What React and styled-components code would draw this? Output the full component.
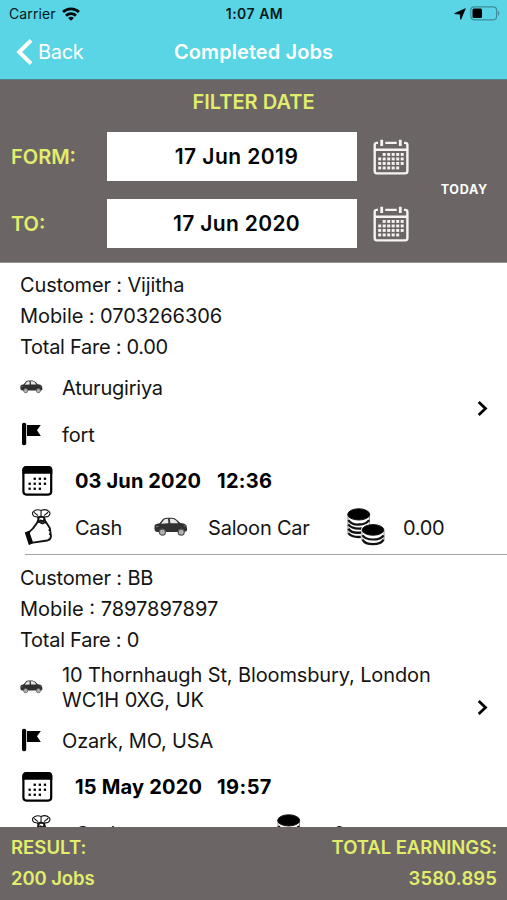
import React from "react";
import styled, { createGlobalStyle } from "styled-components";

const GlobalStyle = createGlobalStyle`
  *, *::before, *::after { box-sizing: border-box; }
  body {
    margin: 0;
    overflow: hidden;
    background: #fff;
    font-family: Inter, "Liberation Sans", sans-serif;
    color: #141414;
  }
  svg { display: block; flex: none; }
`;

const Screen = styled.div`
  display: flex;
  flex-direction: column;
  width: 507px;
  height: 900px;
  background: #fff;
  overflow: hidden;
`;

const Text = styled.span`
  font-size: ${(p) => p.$size || 20}px;
  font-weight: ${(p) => p.$weight || 400};
  letter-spacing: ${(p) => p.$track || 0}px;
  white-space: nowrap;
`;

const Header = styled.header`
  flex: none;
  height: 80px;
  background: #5ad5e6;
  border-bottom: 1px solid #55808a;
`;

const StatusBar = styled.div`
  display: grid;
  grid-template-columns: 1fr auto 1fr;
  align-items: center;
  height: 27px;
  padding: 0 7px 0 9px;
  color: #06191c;
`;

const StatusSide = styled.div`
  display: flex;
  align-items: center;
  gap: ${(p) => (p.$end ? 4 : 6)}px;
  justify-content: ${(p) => (p.$end ? "flex-end" : "flex-start")};
`;

const NavBar = styled.nav`
  display: grid;
  grid-template-columns: 1fr auto 1fr;
  align-items: center;
  height: 50px;
  padding: 0 16px;
  color: #fff;
`;

const BackButton = styled.button`
  display: flex;
  align-items: center;
  gap: 6px;
  padding: 0;
  border: 0;
  background: none;
  color: inherit;
  font: inherit;
`;

const Filter = styled.section`
  flex: none;
  height: 183px;
  padding: 8px 19px 0 11px;
  background: #6b6665;
  border-bottom: 1px solid #979392;
`;

const FilterTitle = styled.h2`
  margin: 0 0 17px;
  padding-left: 8px;
  line-height: 26px;
  text-align: center;
  color: #e2ed6b;
  font-weight: 500;
`;

const FilterBody = styled.div`
  display: flex;
  align-items: center;
  justify-content: space-between;
`;

const DateRows = styled.div`
  display: flex;
  flex-direction: column;
  gap: 18px;
`;

const DateRow = styled.label`
  display: grid;
  grid-template-columns: 96px 250px 52px;
  align-items: center;
  height: 49px;
  color: #e2ed6b;

  svg { justify-self: end; }
`;

const DateField = styled.div`
  display: flex;
  align-items: center;
  justify-content: center;
  height: 49px;
  padding-left: 9px;
  background: #fff;
  color: #050505;
`;

const Today = styled.button`
  padding: 0;
  margin-top: -4px;
  border: 0;
  background: none;
  color: #fff;
  font: inherit;
`;

const List = styled.main`
  flex: 1;
  min-height: 0;
  overflow: hidden;
`;

const Job = styled.article`
  display: grid;
  grid-template-columns: 1fr 30px;
  padding: 7px 0 0 20px;
  height: ${(p) => (p.$last ? "306px" : "291px")};
`;

const Separator = styled.hr`
  height: 1px;
  margin: 0 0 1px 25px;
  border: 0;
  background: #a4a4a4;
`;

const JobInfo = styled.div`
  display: flex;
  flex-direction: column;
`;

const Line = styled.div`
  height: 31px;
  line-height: 31px;
`;

const PlaceRow = styled.div`
  display: grid;
  grid-template-columns: 42px 1fr;
  align-items: center;
  height: ${(p) => p.$height}px;
  line-height: 24.5px;
`;

const PlaceText = styled.div`
  display: flex;
  flex-direction: column;
  padding-top: 2px;
`;

const WhenRow = styled.div`
  display: flex;
  align-items: center;
  height: 46px;
  padding: 2px 0 0 2px;
  color: #000;
`;

const DayText = styled.div`
  width: 142px;
  margin-left: 22px;
`;

const PayRow = styled.div`
  display: flex;
  align-items: center;
  height: 46px;
  padding: 1px 0 0 4px;

  ${Text} { display: block; padding-top: 2px; }
`;

const PayMethod = styled.div`
  width: 79px;
  margin-left: 22px;
`;

const Vehicle = styled.div`
  display: flex;
  align-items: center;
  gap: 20px;
  width: ${(p) => (p.$empty ? 123 : 193)}px;
`;

const Amount = styled.div`
  margin-left: 18px;
`;

const Open = styled.div`
  align-self: start;
  margin-top: ${(p) => p.$top}px;
`;

const Footer = styled.footer`
  flex: none;
  display: flex;
  justify-content: space-between;
  height: 73px;
  padding: 5px 10px 0 11px;
  background: #6b6665;
  color: #e2ed6b;
`;

const Total = styled.div`
  display: flex;
  flex-direction: column;
  line-height: 30.5px;
  text-align: ${(p) => (p.$end ? "right" : "left")};
`;

const WifiIcon = () => (
  <svg width="18" height="14" viewBox="0 0 18 14" fill="none" stroke="#020b0d" strokeWidth="2.8">
    <path d="M1 5.1C5.4.8 12.6.8 17 5.1" />
    <path d="M4 8.6C6.8 6 11.2 6 14 8.6" />
    <path d="M9 13.7 6.1 10.9C7.7 9.5 10.3 9.5 11.9 10.9Z" fill="#020b0d" stroke="none" />
  </svg>
);

const LocationIcon = () => (
  <svg width="12" height="12" viewBox="0 0 12 12">
    <path d="M.7 5.6 11.3.7 6.7 11.4 6.2 6.1Z" fill="#000" stroke="#000" strokeWidth=".8" strokeLinejoin="round" />
  </svg>
);

const BatteryIcon = () => (
  <svg width="30" height="15" viewBox="0 0 30 15">
    <rect x=".8" y=".8" width="25.8" height="13" rx="3.5" fill="none" stroke="#3c8c98" strokeWidth="1.2" />
    <rect x="2.5" y="2.6" width="9.5" height="9.4" rx="1.5" fill="#000" />
    <path d="M28 5v4.6c1.8-.7 1.8-3.9 0-4.6Z" fill="#3c8c98" />
  </svg>
);

const BackIcon = () => (
  <svg width="16" height="26" viewBox="0 0 16 26" fill="none" stroke="#fff" strokeWidth="4">
    <path d="M15 1.4 3.2 13 15 24.6" />
  </svg>
);

const FilterCalendarIcon = () => {
  const dots = [];
  for (let r = 0; r < 4; r++)
    for (let c = 0; c < 6; c++)
      if (!(r === 0 && c === 0) && !(r === 3 && c === 5))
        dots.push(<rect key={`${r}-${c}`} x={5.2 + c * 4.5} y={14 + r * 4.5} width="3" height="2.9" />);
  return (
    <svg width="36" height="36" viewBox="0 0 36 36" fill="#f5f3f3">
      <g fill="none" stroke="#f5f3f3" strokeWidth="2.4">
        <path d="M5 3.9H3.8Q1.7 3.9 1.7 6V32Q1.7 34.4 4 34.4H32Q34.4 34.4 34.4 32V6Q34.4 3.9 32.2 3.9H31M12.3 3.9H23.7M2 10.7H34" />
        <path d="M8.7.8V7M27.3.8V7" strokeWidth="2.8" />
      </g>
      {dots}
    </svg>
  );
};

const CalendarIcon = () => {
  const dots = [];
  for (let r = 0; r < 3; r++)
    for (let c = 0; c < 4; c++)
      if (!(r === 0 && c === 0) && !(r === 2 && c === 3))
        dots.push(<rect key={`${r}-${c}`} x={6.5 + c * 5.1} y={11.6 + r * 5} width="2.3" height="2.3" />);
  return (
    <svg width="31" height="30" viewBox="0 0 31 30">
      <rect x="1.4" y="1.2" width="27.8" height="27.4" rx="3" fill="#fff" stroke="#000" strokeWidth="2.2" />
      <path d="M.4 7.7V4Q.4.3 4 .3H26.6Q30.3.3 30.3 4V7.7Z" />
      {dots}
    </svg>
  );
};

const CarIcon = ({ width, height }) => (
  <svg width={width} height={height} viewBox="0 0 34 20" preserveAspectRatio="none">
    <path
      d="M.6 8.5Q.8 7 5.5 6.2L8.5 2.4Q9.5.8 13 .7H18Q20.5.7 23 3L26.3 6.1Q31 6.5 32.5 8.4L33.2 12.7Q33 14.8 30.5 15H3Q.4 14.6.5 11.8Z"
      fill="#303030"
    />
    <path d="M7 6.7 9.6 3.2Q10.4 1.8 14.1 1.8L14.4 6.3ZM15.8 1.8H18Q20 1.9 22 3.6L24.2 6.3H16.4Z" fill="#e6e6e6" />
    <path d="M2 9.5h2.5M29.8 9h1.8" stroke="#888" strokeWidth=".9" />
    <g fill="#c4c4c4" stroke="#555" strokeWidth="1.2">
      <circle cx="8.4" cy="15.2" r="3" />
      <circle cx="27.2" cy="15.2" r="3" />
    </g>
    <path d="M8.4 13v4.4M6.2 15.2h4.4M27.2 13v4.4M25 15.2h4.4" stroke="#999" strokeWidth=".7" />
  </svg>
);

const FlagIcon = () => (
  <svg width="21" height="24" viewBox="0 0 21 24">
    <rect x="2" y=".8" width="4.2" height="22.4" rx="1.8" />
    <path d="M7 2.9H20.8L17 8.3 20.8 14H7Z" />
  </svg>
);

const MoneyBagIcon = () => (
  <svg width="29" height="38" viewBox="0 0 29 38" fill="none" stroke="#111" strokeWidth="1.4" strokeLinejoin="round">
    <path d="M14.3 9.3 10 8.2Q7.3 5.7 9.3 3.7 12.5.5 17.1 2.4 21.8.3 25.2 3.6 27.2 5.8 24.2 8.4L19.8 9.3ZM17.1 2.5 17 9M10 4.4 14.1 7.6M24.2 4.3 20 7.6" strokeWidth="1.1" />
    <path d="M13.8 9.4Q16.8 7.7 20.5 9.5L19.6 13H15Z" />
    <path d="M15 9.4 13.3 14.5M20 9.5 21.7 14.4M16.1 12 19.9 14" strokeWidth="1.8" />
    <path d="M14.2 13.4 8.8 20.6Q6 22.7 5.1 24.5L4 25 7.2 34.8 23.3 32.5Q26.7 31.6 27 28.4L25.9 20.2 21.9 14 18.4 15.5 14.2 13.4" strokeWidth="1.8" />
    <path d="M.8 24.6 5 22.8 9.2 34.7 4.9 37.2Z" fill="#080808" stroke="none" />
    <path d="M25.8 20.5 25 23M26.6 24.5 25.4 27" />
  </svg>
);

const CoinsIcon = () => (
  <svg width="38" height="38" viewBox="0 0 38 38" fill="none" stroke="#111">
    <g strokeWidth="2.3">
      <path d="M1.3 12.1Q5 17.1 12 16.5 19.3 16.5 22 12" />
      <path d="M1.3 16.4Q5 21.5 15 20.5" />
      <path d="M1.3 20.7Q5 25.8 14 24.5" />
      <path d="M1.3 25.1Q5 29.7 13.8 28.9" />
    </g>
    <path d="M1 6V25.4M22.5 6V16" strokeWidth=".5" />
    <ellipse cx="11.7" cy="6.4" rx="11" ry="5.6" fill="#000" />
    <path d="M14.2 20.5Q16 15.5 26 15.3V37.5Q14.2 37.5 14.2 31Z" fill="#fff" stroke="none" />
    <g strokeWidth="2.2">
      <path d="M15.5 27.3Q18 31.5 26 31.5T36.6 27.3" />
      <path d="M15.5 31.6Q18 36.2 26 36.2T36.6 31.6" />
    </g>
    <path d="M15 22V32M37 22V32" strokeWidth=".5" />
    <ellipse cx="26" cy="21.9" rx="10.8" ry="5.3" fill="#000" />
  </svg>
);

const ChevronIcon = () => (
  <svg width="12" height="16" viewBox="0 0 12 16" fill="none" stroke="#050505" strokeWidth="2.8">
    <path d="M1.7 1 8.5 7.5 1.7 14" />
  </svg>
);

const jobs = [
  {
    lines: [["Customer : Vijitha", -0.15], ["Mobile : 0703266306", -0.06], ["Total Fare : 0.00", -0.28]],
    pickup: [["Aturugiriya", -0.22]],
    drop: ["fort", -0.15],
    day: ["03 Jun 2020", 0.13],
    time: ["12:36", 0.3],
    vehicle: "Saloon Car",
    amount: "0.00",
    openTop: 131,
  },
  {
    lines: [["Customer : BB", -0.15], ["Mobile : 7897897897", 0], ["Total Fare : 0", -0.26]],
    pickup: [["10 Thornhaugh St, Bloomsbury, London", -0.12], ["WC1H 0XG, UK", -0.05]],
    drop: ["Ozark, MO, USA", -0.15],
    day: ["15 May 2020", 0.2],
    time: ["19:57", 0.45],
    vehicle: "",
    amount: "0",
    openTop: 137,
  },
];

const filters = [
  { label: "FORM:", labelTrack: 0, value: "17 Jun 2019", track: 0.45 },
  { label: "TO:", labelTrack: 0, value: "17 Jun 2020", track: 0.35 },
];

function JobCard({ job, last }) {
  return (
    <Job $last={last}>
      <JobInfo>
        {job.lines.map(([text, track]) => (
          <Line key={text}><Text $track={track}>{text}</Text></Line>
        ))}
        <PlaceRow $height={job.pickup.length > 1 ? 61 : 48}>
          <CarIcon width={23} height={14} />
          <PlaceText>
            {job.pickup.map(([text, track]) => <Text key={text} $track={track}>{text}</Text>)}
          </PlaceText>
        </PlaceRow>
        <PlaceRow $height={46}>
          <FlagIcon />
          <PlaceText><Text $track={job.drop[1]}>{job.drop[0]}</Text></PlaceText>
        </PlaceRow>
        <WhenRow>
          <CalendarIcon />
          <DayText><Text $weight={700} $track={job.day[1]}>{job.day[0]}</Text></DayText>
          <Text $weight={700} $track={job.time[1]}>{job.time[0]}</Text>
        </WhenRow>
        <PayRow>
          <MoneyBagIcon />
          <PayMethod><Text $track={-0.3}>Cash</Text></PayMethod>
          <Vehicle $empty={!job.vehicle}>
            {job.vehicle && <CarIcon width={34} height={20} />}
            {job.vehicle && <Text $track={-0.2}>{job.vehicle}</Text>}
          </Vehicle>
          <CoinsIcon />
          <Amount><Text $track={-0.3}>{job.amount}</Text></Amount>
        </PayRow>
      </JobInfo>
      <Open $top={job.openTop}><ChevronIcon /></Open>
    </Job>
  );
}

export default function App() {
  return (
    <Screen>
      <GlobalStyle />
      <Header>
        <StatusBar>
          <StatusSide>
            <Text $size={14} $track={0.1}>Carrier</Text>
            <WifiIcon />
          </StatusSide>
          <Text $size={14} $weight={600} $track={0.5}>1:07 AM</Text>
          <StatusSide $end>
            <LocationIcon />
            <BatteryIcon />
          </StatusSide>
        </StatusBar>
        <NavBar>
          <BackButton>
            <BackIcon />
            <Text $track={-0.3}>Back</Text>
          </BackButton>
          <Text $weight={600} $track={0.08}>Completed Jobs</Text>
        </NavBar>
      </Header>
      <Filter>
        <FilterTitle><Text $weight={560} $track={0.02}>FILTER DATE</Text></FilterTitle>
        <FilterBody>
          <DateRows>
            {filters.map((f) => (
              <DateRow key={f.label}>
                <Text $weight={560} $track={f.labelTrack}>{f.label}</Text>
                <DateField><Text $size={21} $weight={600} $track={f.track}>{f.value}</Text></DateField>
                <FilterCalendarIcon />
              </DateRow>
            ))}
          </DateRows>
          <Today><Text $size={12.5} $weight={700} $track={0.75}>TODAY</Text></Today>
        </FilterBody>
      </Filter>
      <List>
        <JobCard job={jobs[0]} />
        <Separator />
        <JobCard job={jobs[1]} last />
      </List>
      <Footer>
        <Total>
          <Text $size={18.5} $weight={600} $track={0.05}>RESULT:</Text>
          <Text $size={18.5} $weight={600} $track={-0.1}>200 Jobs</Text>
        </Total>
        <Total $end>
          <Text $size={18.5} $weight={600} $track={-0.05}>TOTAL EARNINGS:</Text>
          <Text $size={18.5} $weight={600} $track={0.1}>3580.895</Text>
        </Total>
      </Footer>
    </Screen>
  );
}
